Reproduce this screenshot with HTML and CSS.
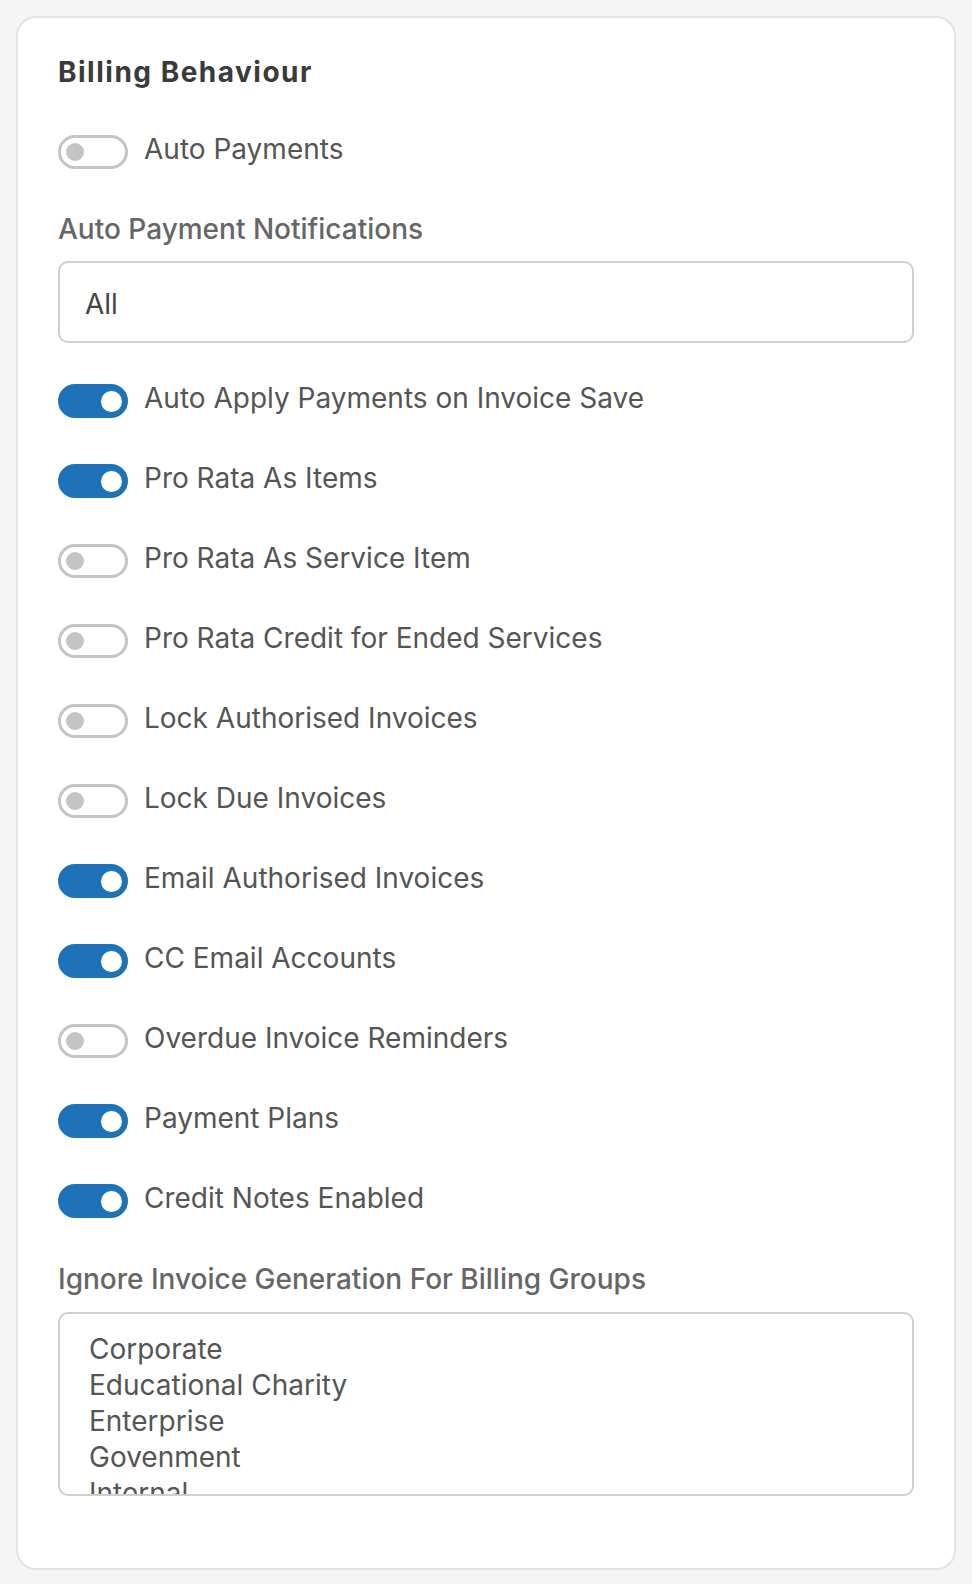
FILE: index.html
```html
<!DOCTYPE html>
<html lang="en">
<head>
  <meta charset="UTF-8" />
  <meta name="viewport" content="width=device-width, initial-scale=1.0"/>
  <title>Billing Behaviour</title>
  <link rel="stylesheet" href="styles.css">
</head>
<body>
  <div class="card">
    <h2 class="title">Billing Behaviour</h2>

    <label class="row first">
      <span class="toggle"></span>
      <span class="row-label">Auto Payments</span>
    </label>

    <!-- Notifications -->
    <div class="field-label">Auto Payment Notifications</div>
    <div class="select">All</div>

    <div class="toggles">
      <label class="row"><span class="toggle on"></span><span class="row-label">Auto Apply Payments on Invoice Save</span></label>
      <label class="row"><span class="toggle on"></span><span class="row-label">Pro Rata As Items</span></label>
      <label class="row"><span class="toggle"></span><span class="row-label">Pro Rata As Service Item</span></label>
      <label class="row"><span class="toggle"></span><span class="row-label">Pro Rata Credit for Ended Services</span></label>
      <label class="row"><span class="toggle"></span><span class="row-label">Lock Authorised Invoices</span></label>
      <label class="row"><span class="toggle"></span><span class="row-label">Lock Due Invoices</span></label>
      <label class="row"><span class="toggle on"></span><span class="row-label">Email Authorised Invoices</span></label>
      <label class="row"><span class="toggle on"></span><span class="row-label">CC Email Accounts</span></label>
      <label class="row"><span class="toggle"></span><span class="row-label">Overdue Invoice Reminders</span></label>
      <label class="row"><span class="toggle on"></span><span class="row-label">Payment Plans</span></label>
      <label class="row"><span class="toggle on"></span><span class="row-label">Credit Notes Enabled</span></label>
    </div>

    <!-- Billing groups -->
    <div class="field-label">Ignore Invoice Generation For Billing Groups</div>
    <div class="listbox">
      <div class="option">Corporate</div>
      <div class="option">Educational Charity</div>
      <div class="option">Enterprise</div>
      <div class="option">Govenment</div>
      <div class="option">Internal</div>
    </div>
  </div>
</body>
</html>
```

FILE: styles.css
```css
* { box-sizing: border-box; }

body {
  margin: 0;
  padding: 16px;
  background: #f5f5f5;
  font-family: Inter, 'Noto Sans', sans-serif;
  color: #555;
}

.card {
  background: #fff;
  border: 2px solid #e3e3e3;
  border-radius: 20px;
  padding: 38px 40px 72px;
}

.title {
  margin: 0 0 44px;
  font-size: 28px;
  line-height: 32px;
  font-weight: 700;
  letter-spacing: 1.5px;
  color: #3a3a3a;
}

.row {
  display: flex;
  align-items: center;
  gap: 16px;
  height: 40px;
}

.row-label {
  font-size: 28px;
  padding-bottom: 6px;
  color: #555;
}

.toggle {
  position: relative;
  width: 70px;
  height: 34px;
  border: 3px solid #c4c4c4;
  border-radius: 17px;
  background: #fff;
  flex-shrink: 0;
}

.toggle::after {
  content: "";
  position: absolute;
  left: 5px;
  top: 5px;
  width: 18px;
  height: 18px;
  border-radius: 50%;
  background: #c4c4c4;
}

.toggle.on {
  background: #1f72b8;
  border-color: #1f72b8;
}

.toggle.on::after {
  left: auto;
  right: 3px;
  top: 3.5px;
  width: 21px;
  height: 21px;
  background: #fff;
}

.field-label {
  font-size: 28px;
  line-height: 36px;
  font-weight: 500;
  color: #666;
  margin: 39px 0 14px;
}

.select {
  height: 82px;
  border: 2px solid #cfcfcf;
  border-radius: 10px;
  padding: 4px 25px 0;
  display: flex;
  align-items: center;
  font-size: 28px;
  color: #444;
}

.toggles {
  margin-top: 38px;
  display: flex;
  flex-direction: column;
  gap: 40px;
}

.toggles + .field-label {
  margin-top: 40px;
  margin-bottom: 15px;
}

.listbox {
  height: 184px;
  border: 2px solid #cfcfcf;
  border-radius: 10px;
  padding: 17px 29px;
  overflow: hidden;
}

.option {
  font-size: 28px;
  line-height: 36px;
  color: #555;
}
```
